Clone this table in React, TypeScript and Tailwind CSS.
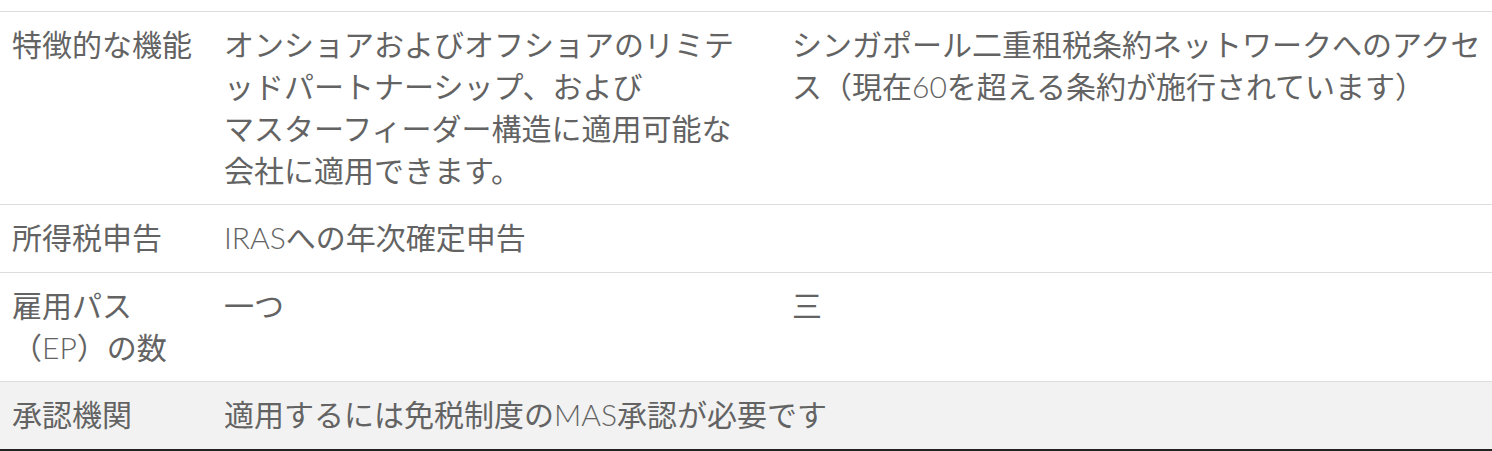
const L = ({ children }: { children: string }) => <span className="font-light">{children}</span>;

const rows = [
  {
    label: <>特徴的な機能</>,
    cells: [
      <>
        オンショアおよびオフショアのリミテ<br />
        ッドパートナーシップ、および<br />
        マスターフィーダー構造に適用可能な<br />
        会社に適用できます。
      </>,
      <>
        シンガポール二重租税条約ネットワークへのアクセ<br />
        ス（現在<L>60</L>を超える条約が施行されています）
      </>,
    ],
  },
  {
    label: <>所得税申告</>,
    cells: [
      <>
        <L>IRAS</L>への年次確定申告
      </>,
    ],
  },
  {
    label: (
      <>
        雇用パス<br />
        （<L>EP</L>）の数
      </>
    ),
    cells: [<>一つ</>, <>三</>],
  },
  {
    label: <>承認機関</>,
    cells: [
      <>
        適用するには免税制度の<L>MAS</L>承認が必要です
      </>,
    ],
    shaded: true,
  },
];

export default function App() {
  return (
    <div className="w-[1492px] h-[451px] bg-white pt-[11px] font-['Lato','Noto_Sans_CJK_JP',sans-serif] text-[30px] leading-[42px] text-[#636363]">
      <div className="border-b-2 border-[#222]">
        {rows.map((row, i) => {
          const single = row.cells.length === 1;
          const pad = single ? 'pl-[12px] pt-[11px] pb-[14px]' : 'pl-[12px] pt-[11px] pb-[13px]';
          return (
            <div
              key={i}
              className={`grid grid-cols-[212px_568px_1fr] border-t border-[#dddddd] ${
                row.shaded ? 'bg-[#f2f2f2]' : 'bg-white'
              }`}
            >
              <div className={`${pad} whitespace-nowrap`}>{row.label}</div>
              {single ? (
                <div className={`${pad} col-span-2 whitespace-nowrap`}>{row.cells[0]}</div>
              ) : (
                row.cells.map((c, j) => (
                  <div key={j} className={`${pad} whitespace-nowrap`}>
                    {c}
                  </div>
                ))
              )}
            </div>
          );
        })}
      </div>
    </div>
  );
}
